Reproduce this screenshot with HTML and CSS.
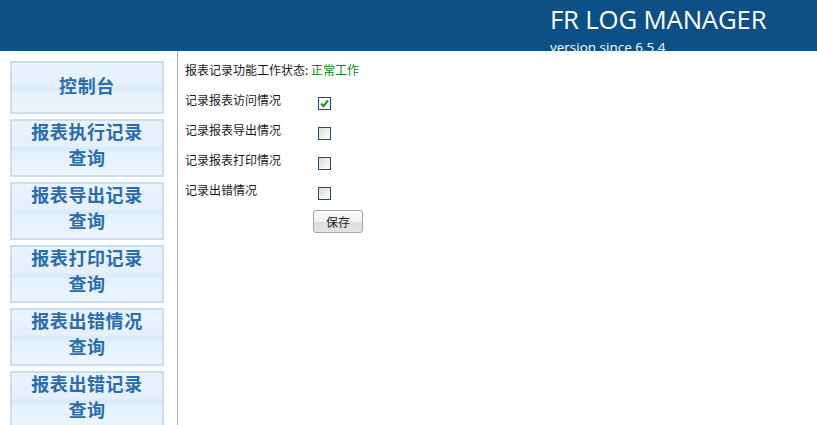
FILE: index.html
```html
<!DOCTYPE html>
<html lang="zh-CN">
<head>
    <meta charset="UTF-8">
    <title>FR LOG MANAGER</title>
    <link rel="stylesheet" href="styles.css">
</head>
<body>
    <header class="top">
        <div class="brand">
            <div class="brand-title">FR LOG MANAGER</div>
            <div class="brand-version">version since 6.5.4</div>
        </div>
    </header>

    <div class="page">
        <aside class="sidebar">
            <a class="menu-btn menu-first">控制台</a>
            <a class="menu-btn">报表执行记录<br>查询</a>
            <a class="menu-btn">报表导出记录<br>查询</a>
            <a class="menu-btn">报表打印记录<br>查询</a>
            <a class="menu-btn">报表出错情况<br>查询</a>
            <a class="menu-btn">报表出错记录<br>查询</a>
        </aside>

        <main class="content">
            <div class="status">报表记录功能工作状态: <span class="status-ok">正常工作</span></div>

            <div class="options">
                <div class="opt-row">
                    <span class="opt-label">记录报表访问情况</span>
                    <span class="check checked">
                        <svg width="11" height="11" viewBox="0 0 11 11"><path d="M2 5.5 L4.5 8 L9 2.5" stroke="#1f9a1f" stroke-width="2.2" fill="none"/></svg>
                    </span>
                </div>
                <div class="opt-row">
                    <span class="opt-label">记录报表导出情况</span>
                    <span class="check"></span>
                </div>
                <div class="opt-row">
                    <span class="opt-label">记录报表打印情况</span>
                    <span class="check"></span>
                </div>
                <div class="opt-row">
                    <span class="opt-label">记录出错情况</span>
                    <span class="check"></span>
                </div>
            </div>

            <div class="actions">
                <button class="save-btn">保存</button>
            </div>
        </main>
    </div>
</body>
</html>
```

FILE: styles.css
```css
* {
    margin: 0;
    padding: 0;
    box-sizing: border-box;
}

body {
    background: #fff;
    color: #1a1a1a;
    font-family: "Noto Sans CJK SC", "Noto Sans", sans-serif;
    font-size: 12px;
    height: 425px;
    overflow: hidden;
}

.top {
    background-color: #0d5085;
    height: 51px;
    overflow: hidden;
    color: #fff;
}

.brand {
    margin-left: 550px;
    padding-top: 3px;
}

.brand-title {
    font-family: "Open Sans", "Noto Sans", sans-serif;
    font-size: 25.8px;
    line-height: 32px;
    letter-spacing: -0.2px;
}

.brand-version {
    font-family: "Open Sans", "Noto Sans", sans-serif;
    font-size: 13.5px;
    line-height: 18px;
    margin-top: 3px;
}

.page {
    display: flex;
    height: 374px;
}

.sidebar {
    width: 178px;
    border-right: 1px solid #9ab7dd;
    padding: 10px 0 0 10px;
    display: flex;
    flex-direction: column;
    gap: 5px;
}

.menu-btn {
    display: flex;
    align-items: center;
    justify-content: center;
    text-align: center;
    width: 154px;
    height: 58px;
    padding-bottom: 9px;
    border: 2px solid #c9def1;
    background: linear-gradient(180deg, #e9f3fd 0%, #e6f0fb 45%, #d9e9f8 52%, #e6f1fc 60%, #ecf5fe 100%);
    color: #2b6cab;
    font-weight: bold;
    font-size: 18px;
    line-height: 26px;
    letter-spacing: 0.6px;
    text-decoration: none;
    flex-shrink: 0;
}

.menu-first {
    height: 53px;
    padding-bottom: 5px;
}

.content {
    padding: 9px 0 0 7px;
}

.status {
    line-height: 20px;
    height: 20px;
}

.status-ok {
    color: #0a8a0a;
}

.options {
    margin-top: 7px;
}

.opt-row {
    display: flex;
    align-items: center;
    height: 30px;
}

.opt-label {
    width: 133px;
    line-height: 20px;
    position: relative;
    top: -2px;
}

.check {
    display: inline-flex;
    align-items: center;
    justify-content: center;
    width: 13px;
    height: 13px;
    border: 1px solid #1c4f7c;
    background: linear-gradient(135deg, #dcdcd6 0%, #f2f2ee 60%, #ffffff 100%);
    position: relative;
    top: 1px;
}

.check.checked {
    background: #fff;
}

.actions {
    padding-left: 128px;
    padding-top: 3px;
}

.save-btn {
    width: 50px;
    height: 23px;
    border: 1px solid #a5a5a5;
    border-radius: 3px;
    background: linear-gradient(180deg, #fafafa 0%, #f1f1f1 50%, #dedede 55%, #e3e3e3 100%);
    font-family: "Noto Sans CJK SC", sans-serif;
    font-size: 12px;
    color: #222;
    line-height: 20px;
}
```
